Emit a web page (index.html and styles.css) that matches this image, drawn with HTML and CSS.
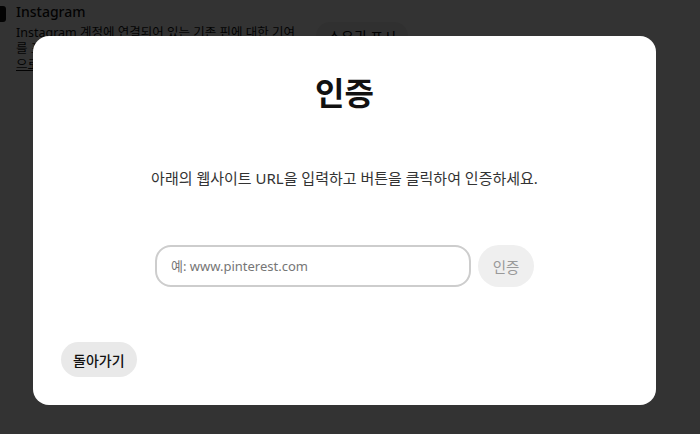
FILE: index.html
```html
<!DOCTYPE html>
<html lang="ko">
<head>
    <meta charset="UTF-8">
    <meta name="viewport" content="width=device-width, initial-scale=1.0">
    <title>인증</title>
    <link rel="stylesheet" href="styles.css">
</head>
<body>
    <div class="page">
        <div class="account-row">
            <span class="account-icon"></span>
            <div class="account-info">
                <h4>Instagram</h4>
                <p>Instagram 계정에 연결되어 있는 기존 핀에 대한 기여를 표시하고 분석 정보를 확인하세요<br><a href="#">으로 이동</a></p>
            </div>
            <button class="claim-btn">소유권 표시</button>
        </div>
    </div>

    <div class="overlay">
        <div class="modal">
            <h1>인증</h1>
            <p class="desc">아래의 웹사이트 URL을 입력하고 버튼을 클릭하여 인증하세요.</p>
            <form class="verify-form">
                <input type="url" placeholder="예: www.pinterest.com">
                <button type="submit" disabled>인증</button>
            </form>
            <div class="modal-footer">
                <button class="back-btn">돌아가기</button>
            </div>
        </div>
    </div>
</body>
</html>
```

FILE: styles.css
```css
body {
    font-family: "Noto Sans", "Noto Sans CJK KR", sans-serif;
    margin: 0;
    padding: 0;
    background-color: #fff;
    color: #111;
}
.page {
    padding: 2px 0 0 0;
}
.account-row {
    display: flex;
    align-items: flex-start;
}
.account-icon {
    width: 6px;
    height: 16px;
    margin-top: 4px;
    margin-right: 10px;
    background: #111;
    border-radius: 0 3px 3px 0;
}
.account-info {
    width: 290px;
}
.account-info h4 {
    margin: 0;
    font-size: 14px;
    font-weight: 500;
    line-height: 20px;
}
.account-info p {
    margin: 3px 0 0;
    font-size: 12.5px;
    line-height: 16px;
    height: 48px;
    overflow: hidden;
}
.account-info a {
    color: #111;
}
.claim-btn {
    margin: 20px 0 0 10px;
    background: #efefef;
    border: none;
    border-radius: 16px;
    padding: 4px 12px;
    font-family: inherit;
    font-size: 14px;
}
.overlay {
    position: fixed;
    inset: 0;
    background: rgba(0, 0, 0, 0.8);
    padding: 36px 0 0 33px;
}
.modal {
    width: 623px;
    height: 369px;
    box-sizing: border-box;
    background: #fff;
    border-radius: 16px;
    padding: 38px 28px 28px;
    display: flex;
    flex-direction: column;
    align-items: center;
}
.modal h1 {
    margin: 0;
    font-size: 32px;
    line-height: 38px;
    font-weight: 700;
    color: #111;
}
.desc {
    margin: 56px 0 0;
    font-size: 15px;
    line-height: 20px;
    color: #333;
}
.verify-form {
    margin-top: 57px;
    display: flex;
    gap: 7px;
}
.verify-form input {
    width: 316px;
    height: 42px;
    box-sizing: border-box;
    border: 2px solid #cdcdcd;
    border-radius: 16px;
    padding: 0 14px;
    font-family: inherit;
    font-size: 13px;
    outline: none;
}
.verify-form input::placeholder {
    color: #767676;
}
.verify-form button {
    width: 56px;
    height: 42px;
    border: none;
    border-radius: 21px;
    background: #efefef;
    color: #999;
    font-family: inherit;
    font-size: 14.5px;
}
.modal-footer {
    margin-top: auto;
    align-self: stretch;
}
.back-btn {
    height: 35px;
    padding: 0 12px;
    border: none;
    border-radius: 18px;
    background: #e9e9e9;
    color: #111;
    font-family: inherit;
    font-size: 14px;
    font-weight: 500;
}
```
